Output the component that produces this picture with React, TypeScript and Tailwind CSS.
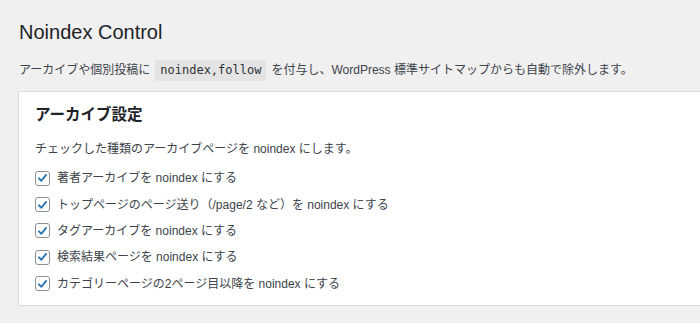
import React, { useState } from "react";

const options = [
  "著者アーカイブを noindex にする",
  "トップページのページ送り（/page/2 など）を noindex にする",
  "タグアーカイブを noindex にする",
  "検索結果ページを noindex にする",
  "カテゴリーページの2ページ目以降を noindex にする",
];

const Check: React.FC<{ checked: boolean; onClick: () => void }> = ({ checked, onClick }) => (
  <button
    type="button"
    onClick={onClick}
    className="w-[15px] h-[15px] shrink-0 rounded-[3px] border border-[#8c8f94] bg-white flex items-center justify-center"
  >
    {checked && (
      <svg viewBox="0 0 20 20" className="w-[14px] h-[14px]">
        <path d="M4.5 10.5 L8.3 14.2 L15.5 5.2" fill="none" stroke="#2271b1" strokeWidth={2.8} strokeLinecap="round" strokeLinejoin="round" />
      </svg>
    )}
  </button>
);

export default function App() {
  const [checked, setChecked] = useState<boolean[]>(options.map(() => true));

  return (
    <div
      className="min-h-screen bg-[#f0f0f1] text-[#3c434a] pl-[18px] pt-[19px]"
      style={{ fontFamily: '"Liberation Sans", "Noto Sans CJK JP", sans-serif' }}
    >
      <h1 className="ml-[1px] text-[20px] leading-[26px] text-[#1d2327] font-normal">Noindex Control</h1>

      <p className="ml-[1px] mt-[15px] text-[12px] leading-[21px] flex items-center">
        アーカイブや個別投稿に
        <code
          className="mx-[5px] px-[5px] bg-[#e4e4e5] text-[#2c3338] text-[12px] leading-[21px]"
          style={{ fontFamily: '"DejaVu Sans Mono", "Liberation Mono", monospace' }}
        >
          noindex,follow
        </code>
        を付与し、WordPress 標準サイトマップからも自動で除外します。
      </p>

      <div className="mt-[10px] bg-white border-l border-y border-[#dcdcde] pl-[16px] pt-[13px] pb-[8px]">
        <h2 className="text-[15.5px] leading-[20px] font-bold text-[#1d2327]">アーカイブ設定</h2>
        <p className="mt-[16px] text-[12px] leading-[16px]">チェックした種類のアーカイブページを noindex にします。</p>
        <div className="mt-[8px] flex flex-col">
          {options.map((label, i) => (
            <label key={i} className="h-[26.4px] flex items-center gap-[7px] text-[12px] cursor-pointer">
              <Check
                checked={checked[i]}
                onClick={() => setChecked(checked.map((c, j) => (j === i ? !c : c)))}
              />
              <span>{label}</span>
            </label>
          ))}
        </div>
      </div>
    </div>
  );
}
